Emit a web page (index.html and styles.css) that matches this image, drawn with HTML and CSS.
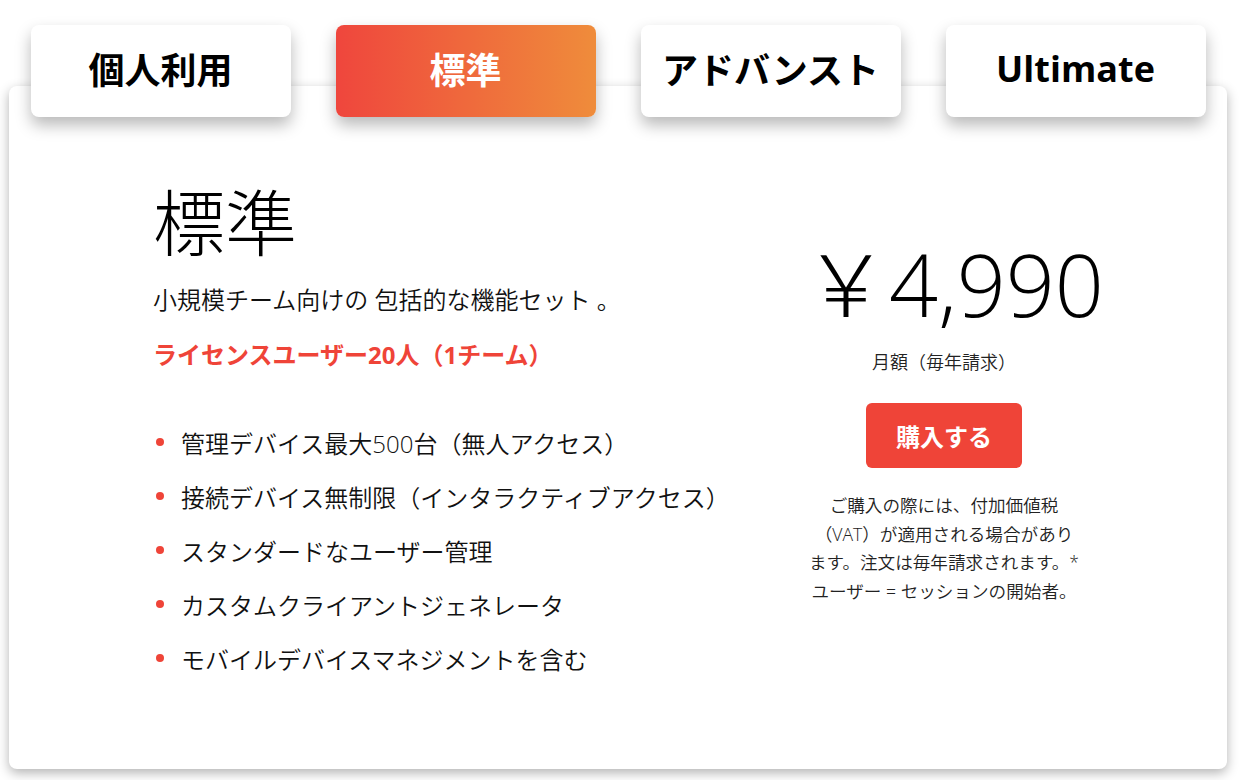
FILE: index.html
```html
<!DOCTYPE html>
<html lang="ja">
<head>
<meta charset="utf-8">
<title>料金プラン</title>
<link rel="stylesheet" href="styles.css">
</head>
<body>
<div class="page">
  <nav class="tabs">
    <div class="tab">個人利用</div>
    <div class="tab tab-active">標準</div>
    <div class="tab">アドバンスト</div>
    <div class="tab">Ultimate</div>
  </nav>
  <section class="card">
    <div class="info">
      <h1 class="plan-title">標準</h1>
      <p class="plan-desc">小規模チーム向けの 包括的な機能セット 。</p>
      <p class="plan-license">ライセンスユーザー20人（1チーム）</p>
      <ul class="features">
        <li>管理デバイス最大500台（無人アクセス）</li>
        <li>接続デバイス無制限（インタラクティブアクセス）</li>
        <li>スタンダードなユーザー管理</li>
        <li>カスタムクライアントジェネレータ</li>
        <li>モバイルデバイスマネジメントを含む</li>
      </ul>
    </div>
    <div class="buy">
      <div class="price">￥4,990</div>
      <div class="period">月額（毎年請求）</div>
      <button class="buy-btn">購入する</button>
      <p class="note">ご購入の際には、付加価値税（VAT）が適用される場合があります。注文は毎年請求されます。* ユーザー = セッションの開始者。</p>
    </div>
  </section>
</div>
</body>
</html>
```

FILE: styles.css
```css
* { box-sizing: border-box; }
html, body { margin: 0; padding: 0; background: #ffffff; }
body {
  font-family: "Open Sans", "Noto Sans CJK JP", sans-serif;
  color: #111;
}
.page {
  width: 1241px;
  padding: 25px 14px 11px 9px;
}
.tabs {
  display: flex;
  justify-content: center;
  gap: 45px;
  margin-bottom: -31px;
  position: relative;
  z-index: 1;
}
.tab {
  width: 260px;
  height: 92px;
  padding-bottom: 5px;
  border-radius: 8px;
  background: #ffffff;
  box-shadow: 0 8px 16px rgba(0, 0, 0, 0.28);
  display: flex;
  align-items: center;
  justify-content: center;
  font-size: 36px;
  font-weight: 700;
  color: #000;
}
.tab-active {
  background: linear-gradient(90deg, #ef463d 0%, #ef8c3b 100%);
  color: #fff;
}
.card {
  height: 683px;
  background: #fff;
  border-radius: 8px;
  box-shadow: 0 4px 12px rgba(0, 0, 0, 0.3);
  display: flex;
  padding: 100px 0 0 144px;
}
.info { width: 641px; }
.plan-title {
  margin: 0;
  font-size: 72px;
  line-height: 72px;
  font-weight: 300;
  color: #000;
}
.plan-desc {
  margin: 25px 0 0;
  font-size: 24px;
  line-height: 33px;
  font-weight: 350;
  color: #111;
}
.plan-license {
  margin: 22px 0 0;
  font-size: 24px;
  line-height: 33px;
  font-weight: 700;
  color: #ef4438;
}
.features {
  list-style: none;
  margin: 44px 0 0;
  padding: 0;
}
.features li {
  display: flex;
  align-items: center;
  gap: 17px;
  height: 54px;
  padding-left: 3px;
  font-size: 24px;
  font-weight: 350;
  color: #111;
}
.features li::before {
  content: "";
  width: 8px;
  height: 8px;
  border-radius: 50%;
  background: #ef4438;
  flex: 0 0 8px;
}
.buy {
  width: 300px;
  display: flex;
  flex-direction: column;
  align-items: center;
  text-align: center;
}
.price {
  margin-top: 55px;
  font-size: 86px;
  line-height: 86px;
  font-weight: 300;
  color: #000;
  padding-left: 19px;
}
.period {
  margin-top: 23px;
  font-size: 18px;
  line-height: 24px;
  font-weight: 350;
  color: #222;
}
.buy-btn {
  margin-top: 29px;
  width: 156px;
  height: 65px;
  border: none;
  border-radius: 6px;
  background: #ef4438;
  color: #fff;
  font-family: inherit;
  font-size: 24px;
  font-weight: 700;
}
.note {
  margin: 23px 0 0;
  width: 276px;
  font-size: 17.6px;
  line-height: 28.7px;
  font-weight: 350;
  color: #222;
}
```
